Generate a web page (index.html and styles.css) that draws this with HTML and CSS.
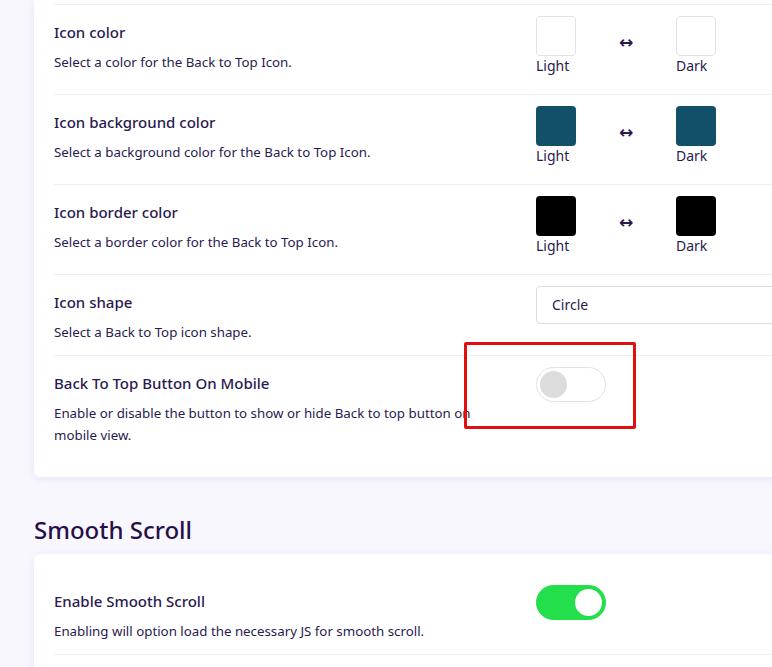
FILE: index.html
```html
<!DOCTYPE html>
<html lang="en">
<head>
    <meta charset="UTF-8">
    <meta name="viewport" content="width=device-width, initial-scale=1.0">
    <title>Back to Top Settings</title>
    <link rel="stylesheet" href="styles.css">
</head>
<body>
    <main class="page">
        <section class="card card-cut">
            <div class="row">
                <div class="info">
                    <h3>Icon color</h3>
                    <p>Select a color for the Back to Top Icon.</p>
                </div>
                <div class="control pair">
                    <div class="swatch-box">
                        <span class="swatch swatch-white"></span>
                        <span class="swatch-label">Light</span>
                    </div>
                    <span class="arrow">&#8596;</span>
                    <div class="swatch-box">
                        <span class="swatch swatch-white"></span>
                        <span class="swatch-label">Dark</span>
                    </div>
                </div>
            </div>
            <div class="row">
                <div class="info">
                    <h3>Icon background color</h3>
                    <p>Select a background color for the Back to Top Icon.</p>
                </div>
                <div class="control pair">
                    <div class="swatch-box">
                        <span class="swatch swatch-teal"></span>
                        <span class="swatch-label">Light</span>
                    </div>
                    <span class="arrow">&#8596;</span>
                    <div class="swatch-box">
                        <span class="swatch swatch-teal"></span>
                        <span class="swatch-label">Dark</span>
                    </div>
                </div>
            </div>
            <div class="row">
                <div class="info">
                    <h3>Icon border color</h3>
                    <p>Select a border color for the Back to Top Icon.</p>
                </div>
                <div class="control pair">
                    <div class="swatch-box">
                        <span class="swatch swatch-black"></span>
                        <span class="swatch-label">Light</span>
                    </div>
                    <span class="arrow">&#8596;</span>
                    <div class="swatch-box">
                        <span class="swatch swatch-black"></span>
                        <span class="swatch-label">Dark</span>
                    </div>
                </div>
            </div>
            <div class="row">
                <div class="info">
                    <h3>Icon shape</h3>
                    <p>Select a Back to Top icon shape.</p>
                </div>
                <div class="control">
                    <div class="select">Circle</div>
                </div>
            </div>
            <div class="row">
                <div class="info">
                    <h3>Back To Top Button On Mobile</h3>
                    <p>Enable or disable the button to show or hide Back to top button on mobile view.</p>
                </div>
                <div class="control">
                    <span class="toggle"><span class="knob"></span></span>
                </div>
            </div>
        </section>

        <h2 class="section-title">Smooth Scroll</h2>
        <section class="card card-top">
            <div class="row">
                <div class="info">
                    <h3>Enable Smooth Scroll</h3>
                    <p>Enabling will option load the necessary JS for smooth scroll.</p>
                </div>
                <div class="control">
                    <span class="toggle toggle-on"><span class="knob"></span></span>
                </div>
            </div>
            <div class="row row-empty"></div>
        </section>
    </main>
    <div class="highlight"></div>
</body>
</html>
```

FILE: styles.css
```css
body
{
    margin:0;
    background-color:#f9f7fe;
    font-family:"Noto Sans",Lato,sans-serif;
    color:#2a1a4f;
    overflow:hidden;
    position:relative;
    height:667px;
}
.page
{
    padding-left:34px;
}
.card
{
    width:900px;
    background-color:#fff;
    border-radius:6px;
    box-shadow:0 2px 10px rgba(110,80,200,0.12);
    padding:0 20px;
    box-sizing:border-box;
}
.card-cut
{
    padding-top:4px;
    padding-bottom:19px;
    border-radius:0 0 6px 6px;
}
.card-top
{
    padding-top:20px;
}
.row
{
    display:flex;
    border-top:1px solid #f0eef4;
}
.card-top .row:first-child
{
    border-top:none;
}
.row-empty
{
    height:30px;
}
.info
{
    width:482px;
    padding:16px 0 12px;
}
.info h3
{
    margin:0;
    font-size:15px;
    font-weight:500;
    line-height:22px;
}
.info p
{
    margin:8px 0 0;
    font-size:13.3px;
    line-height:22px;
    max-width:420px;
}
.control
{
    padding:11px 0 18px;
}
.pair
{
    display:flex;
    align-items:flex-start;
}
.swatch-box
{
    display:flex;
    flex-direction:column;
    width:40px;
}
.swatch
{
    width:40px;
    height:40px;
    border-radius:4px;
    box-sizing:border-box;
}
.swatch-white
{
    background-color:#fff;
    border:1px solid #e2e2e2;
}
.swatch-teal
{
    background-color:#124f68;
}
.swatch-black
{
    background-color:#000;
}
.swatch-label
{
    font-size:14px;
    line-height:20px;
}
.arrow
{
    width:100px;
    text-align:center;
    margin-top:17px;
    font-size:17px;
    font-weight:bold;
    line-height:18px;
    font-family:"DejaVu Sans",sans-serif;
}
.select
{
    width:300px;
    height:38px;
    box-sizing:border-box;
    border:1px solid #dcdcdc;
    border-radius:4px;
    padding:0 15px;
    font-size:14px;
    line-height:36px;
}
.toggle
{
    display:flex;
    align-items:center;
    width:70px;
    height:35px;
    box-sizing:border-box;
    border:1px solid #e2e2e2;
    border-radius:18px;
    padding:0 3px;
    background-color:#fff;
}
.knob
{
    width:27px;
    height:27px;
    border-radius:50%;
    background-color:#dcdcdc;
}
.toggle-on
{
    background-color:#23df4b;
    border-color:#23df4b;
    justify-content:flex-end;
}
.toggle-on .knob
{
    background-color:#fff;
}
.section-title
{
    margin:38px 0 9px;
    font-size:24px;
    font-weight:500;
    line-height:30px;
    color:#261048;
}
.highlight
{
    position:absolute;
    left:464px;
    top:342px;
    width:172px;
    height:87px;
    box-sizing:border-box;
    border:3px solid #e01010;
    border-radius:2px;
}
```
